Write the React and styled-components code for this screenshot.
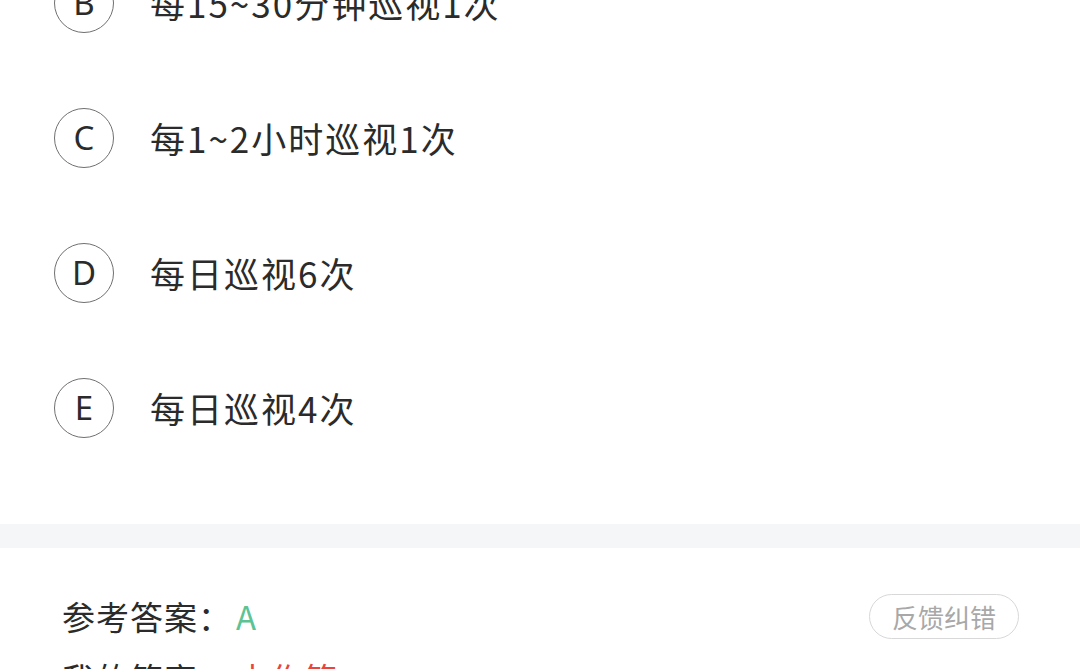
import React from 'react';
import styled, { createGlobalStyle } from 'styled-components';

const GlobalStyle = createGlobalStyle`
  html, body {
    margin: 0;
    padding: 0;
    background: #ffffff;
    overflow: hidden;
  }
  body {
    font-family: "Noto Sans CJK SC", "Noto Sans", sans-serif;
    color: #2b2b2b;
  }
`;

const options = [
  { key: 'B', text: '每15~30分钟巡视1次' },
  { key: 'C', text: '每1~2小时巡视1次' },
  { key: 'D', text: '每日巡视6次' },
  { key: 'E', text: '每日巡视4次' },
];

function App() {
  return (
    <Page>
      <GlobalStyle />
      <OptionList>
        {options.map((o) => (
          <OptionRow key={o.key}>
            <Letter>{o.key}</Letter>
            <OptionText>{o.text}</OptionText>
          </OptionRow>
        ))}
      </OptionList>
      <Divider />
      <AnswerBox>
        <AnswerLine>
          <Label>参考答案：</Label>
          <Value color="#5cc394">A</Value>
          <Feedback>反馈纠错</Feedback>
        </AnswerLine>
        <AnswerLine>
          <Label>我的答案：</Label>
          <Value color="#e8453c">未作答</Value>
        </AnswerLine>
      </AnswerBox>
    </Page>
  );
}

export default App;

const Page = styled.div`
  width: 1080px;
  height: 669px;
  overflow: hidden;
`;

const OptionList = styled.div`
  margin-top: -65px;
  padding-bottom: 49px;
`;

const OptionRow = styled.div`
  height: 135px;
  display: flex;
  align-items: center;
  padding-left: 54px;
`;

const Letter = styled.div`
  width: 58px;
  height: 58px;
  border: 1.3px solid #707070;
  border-radius: 50%;
  display: flex;
  align-items: center;
  justify-content: center;
  font-family: "Noto Sans", "Liberation Sans", sans-serif;
  font-size: 33px;
  color: #2b2b2b;
  flex-shrink: 0;
`;

const OptionText = styled.div`
  margin-left: 36px;
  font-size: 35px;
  color: #2b2b2b;
  letter-spacing: 2px;
`;

const Divider = styled.div`
  height: 24px;
  background: #f5f6f7;
`;

const AnswerBox = styled.div`
  padding: 45px 62px 0 62px;
  display: flex;
  flex-direction: column;
  gap: 16px;
`;

const AnswerLine = styled.div`
  display: flex;
  align-items: center;
  height: 46px;
  font-size: 33px;
  letter-spacing: 1px;
`;

const Label = styled.span`
  color: #2b2b2b;
`;

const Value = styled.span`
  color: ${(p) => p.color};
  margin-left: 4px;
`;

const Feedback = styled.div`
  margin-left: auto;
  margin-right: -1px;
  width: 148px;
  height: 43px;
  border: 1.3px solid #d8d8d8;
  border-radius: 24px;
  display: flex;
  align-items: center;
  justify-content: center;
  font-size: 26px;
  letter-spacing: 0;
  color: #a8a8a8;
`;
